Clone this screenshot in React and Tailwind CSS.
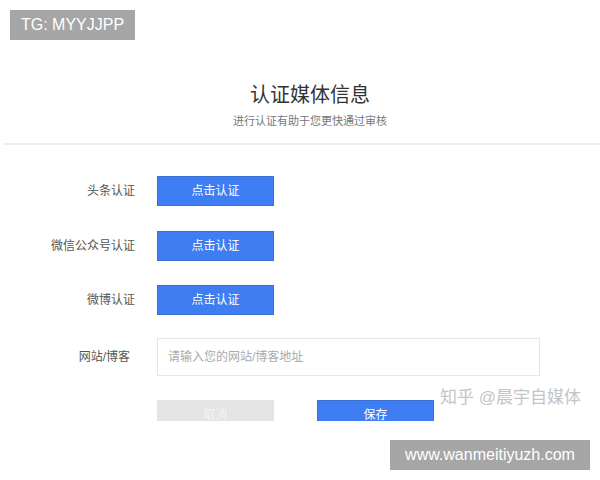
import React from "react";

const FONT = { fontFamily: '"Liberation Sans", "Noto Sans CJK SC", sans-serif' };

const rows = [
  { label: "头条认证", gap: "mt-[31px]" },
  { label: "微信公众号认证", gap: "mt-[25px]" },
  { label: "微博认证", gap: "mt-[24px]" },
];

const BlueButton = ({ children }) => (
  <button
    type="button"
    className="w-[117px] h-[30px] bg-[#3f7ef2] border border-[#3a6fd6] text-white text-[12px] flex items-center justify-center"
  >
    {children}
  </button>
);

export default function App() {
  return (
    <div className="relative w-[600px] h-[480px] bg-white overflow-hidden" style={FONT}>
      <div className="absolute top-[10px] left-[10px] w-[125px] h-[30px] bg-[#a6a6a6] text-white text-[16px] flex items-center justify-center">
        TG: MYYJJPP
      </div>

      <div className="pt-[82px] flex flex-col items-center pl-[20px]">
        <div className="text-[20px] leading-[26px] text-[#333]">认证媒体信息</div>
        <div className="mt-[6px] text-[11px] leading-[14px] text-[#777]">进行认证有助于您更快通过审核</div>
      </div>
      <div className="mt-[15px] ml-[4px] h-[2px] bg-[#eeeeee]" />

      {rows.map((r) => (
        <div key={r.label} className={"flex items-center " + r.gap}>
          <div className="w-[135px] text-right text-[12px] text-[#555]">{r.label}</div>
          <div className="ml-[22px]">
            <BlueButton>点击认证</BlueButton>
          </div>
        </div>
      ))}

      <div className="flex items-center mt-[23px]">
        <div className="w-[130px] text-right text-[12px] text-[#555]">网站/博客</div>
        <div className="ml-[27px] w-[383px] h-[38px] border border-[#e6e6e6] flex items-center px-[10px] text-[12px] text-[#aaa]">
          请输入您的网站/博客地址
        </div>
      </div>

      <div className="flex mt-[24px] ml-[157px] gap-[43px] h-[21px] overflow-hidden">
        <button type="button" className="w-[117px] h-[30px] bg-[#e4e4e4] text-[#f4f4f4] text-[12px] flex items-center justify-center">
          取消
        </button>
        <BlueButton>保存</BlueButton>
      </div>

      <div className="absolute top-[385px] left-[440px] text-[17px] text-[#c4c4c4]">
        知乎 @晨宇自媒体
      </div>

      <div className="absolute top-[440px] left-[390px] w-[200px] h-[30px] bg-[#a6a6a6] text-white text-[16px] flex items-center justify-center">
        www.wanmeitiyuzh.com
      </div>
    </div>
  );
}
